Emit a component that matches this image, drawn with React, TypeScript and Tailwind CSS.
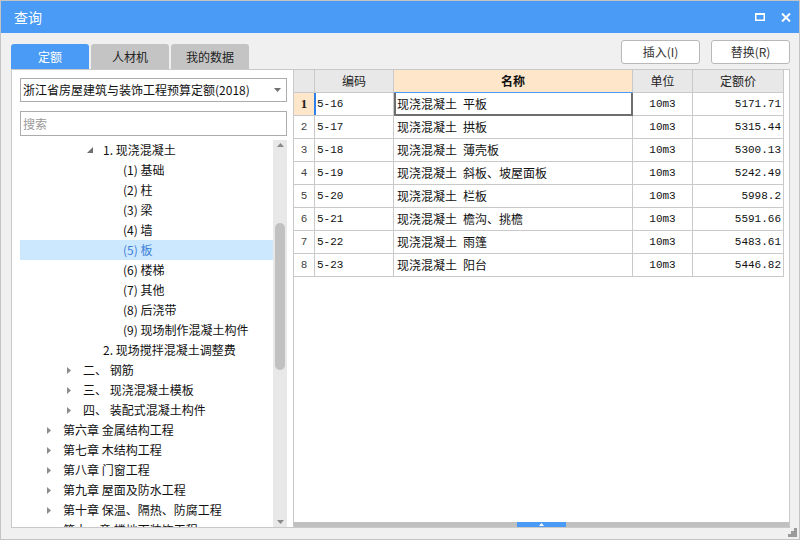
import React from 'react';

type TreeRow = { l: 1 | 2 | 3 | 4; t: string; tri?: 'open' | 'closed'; sel?: boolean };

const tree: TreeRow[] = [
  { l: 3, t: '1. 现浇混凝土', tri: 'open' },
  { l: 4, t: '(1) 基础' },
  { l: 4, t: '(2) 柱' },
  { l: 4, t: '(3) 梁' },
  { l: 4, t: '(4) 墙' },
  { l: 4, t: '(5) 板', sel: true },
  { l: 4, t: '(6) 楼梯' },
  { l: 4, t: '(7) 其他' },
  { l: 4, t: '(8) 后浇带' },
  { l: 4, t: '(9) 现场制作混凝土构件' },
  { l: 3, t: '2. 现场搅拌混凝土调整费' },
  { l: 2, t: '二、 钢筋', tri: 'closed' },
  { l: 2, t: '三、 现浇混凝土模板', tri: 'closed' },
  { l: 2, t: '四、 装配式混凝土构件', tri: 'closed' },
  { l: 1, t: '第六章 金属结构工程', tri: 'closed' },
  { l: 1, t: '第七章 木结构工程', tri: 'closed' },
  { l: 1, t: '第八章 门窗工程', tri: 'closed' },
  { l: 1, t: '第九章 屋面及防水工程', tri: 'closed' },
  { l: 1, t: '第十章 保温、隔热、防腐工程', tri: 'closed' },
  { l: 1, t: '第十一章 楼地面装饰工程', tri: 'closed' },
];

const pad: Record<number, string> = {
  1: 'pl-[27px]',
  2: 'pl-[47px]',
  3: 'pl-[67px]',
  4: 'pl-[87px]',
};

const rows = [
  ['5-16', '现浇混凝土', '平板', '10m3', '5171.71'],
  ['5-17', '现浇混凝土', '拱板', '10m3', '5315.44'],
  ['5-18', '现浇混凝土', '薄壳板', '10m3', '5300.13'],
  ['5-19', '现浇混凝土', '斜板、坡屋面板', '10m3', '5242.49'],
  ['5-20', '现浇混凝土', '栏板', '10m3', '5998.2'],
  ['5-21', '现浇混凝土', '檐沟、挑檐', '10m3', '5591.66'],
  ['5-22', '现浇混凝土', '雨篷', '10m3', '5483.61'],
  ['5-23', '现浇混凝土', '阳台', '10m3', '5446.82'],
];

const cellB = 'border-r border-b border-[#c9c9c9]';
const mono = "font-['Liberation_Mono','Noto_Sans_CJK_SC',monospace] text-[11px] text-[#111]";

export default function App() {
  return (
    <div className="w-[800px] h-[540px] bg-[#f0f0f0] border border-[#c4c4c4] flex flex-col relative overflow-hidden font-['Noto_Sans_CJK_SC',sans-serif] text-[12px] text-[#111]">
      {/* Title bar */}
      <div className="h-[32px] shrink-0 bg-[#4a9bf5] flex items-center pl-[13px] pr-[8px]">
        <span className="text-white text-[14px] leading-none">查询</span>
        <div className="ml-auto flex items-center gap-[16px]">
          <svg width="10" height="8" viewBox="0 0 10 8">
            <rect x="0.75" y="1" width="8.5" height="6.25" fill="none" stroke="#fff" strokeWidth="1.5" />
            <rect x="0" y="0" width="10" height="2" fill="#fff" />
          </svg>
          <svg width="10" height="9" viewBox="0 0 10 9">
            <path d="M1 0.5 L9 8.5 M9 0.5 L1 8.5" stroke="#fff" strokeWidth="2" />
          </svg>
        </div>
      </div>

      {/* Content */}
      <div className="flex flex-1 min-h-0 pl-[10px] pr-[9px]">
        {/* Left column */}
        <div className="w-[282px] shrink-0 flex flex-col pt-[11px] pb-[11px]">
          <div className="flex gap-[2px] h-[25px] shrink-0">
            <div className="w-[78px] bg-[#4a9bf5] text-white rounded-t-[3px] flex items-center justify-center leading-none">定额</div>
            <div className="w-[78px] bg-[#c4c4c4] text-[#222] rounded-t-[3px] flex items-center justify-center leading-none">人材机</div>
            <div className="w-[78px] bg-[#c4c4c4] text-[#222] rounded-t-[3px] flex items-center justify-center leading-none">我的数据</div>
          </div>
          <div className="flex-1 min-h-0 bg-white border-l border-t border-b border-[#c9c9c9] pl-[8px] pr-[6px] pt-[8px] flex flex-col">
            <div className="h-[24px] shrink-0 border border-[#acacac] flex items-center pl-[2px] pr-[5px]">
              <span className="leading-none text-[#111]">浙江省房屋建筑与装饰工程预算定额(2018)</span>
              <svg className="ml-auto" width="7" height="4" viewBox="0 0 7 4">
                <path d="M0 0 L7 0 L3.5 4Z" fill="#707070" />
              </svg>
            </div>
            <div className="h-[25px] shrink-0 mt-[9px] border border-[#acacac] flex items-center pl-[2px]">
              <span className="leading-none text-[#9a9a9a]">搜索</span>
            </div>
            <div className="flex-1 min-h-0 mt-[4px] flex overflow-hidden">
              <div className="flex-1 min-w-0 flex flex-col">
                {tree.map((r, i) => (
                  <div
                    key={i}
                    className={`h-[20px] shrink-0 flex items-center ${pad[r.l]} ${r.sel ? 'bg-[#cce8ff] text-[#3c7fd6]' : 'text-[#111]'}`}
                  >
                    <div className="w-[16px] shrink-0 flex items-center">
                      {r.tri === 'open' && (
                        <svg width="6" height="6" viewBox="0 0 6 6">
                          <path d="M6 0 L6 6 L0 6Z" fill="#6f6f6f" />
                        </svg>
                      )}
                      {r.tri === 'closed' && (
                        <svg width="4" height="7" viewBox="0 0 4 7">
                          <path d="M0 0 L4 3.5 L0 7Z" fill="#8c8c8c" />
                        </svg>
                      )}
                    </div>
                    <span className="leading-[20px] whitespace-nowrap">{r.t}</span>
                  </div>
                ))}
              </div>
              <div className="w-[14px] shrink-0 bg-[#e8e8e8] flex flex-col">
                <div className="h-[12px] shrink-0 pt-[3px] flex justify-center items-start">
                  <svg width="7" height="4" viewBox="0 0 7 4">
                    <path d="M3.5 0 L7 4 L0 4Z" fill="#8a8a8a" />
                  </svg>
                </div>
                <div className="mt-[71px] h-[147px] w-[10px] self-center rounded-full bg-[#c1c1c1]" />
                <div className="mt-auto h-[10px] shrink-0 pt-[3px] flex justify-center items-start">
                  <svg width="7" height="4" viewBox="0 0 7 4">
                    <path d="M0 0 L7 0 L3.5 4Z" fill="#8a8a8a" />
                  </svg>
                </div>
              </div>
            </div>
          </div>
        </div>

        {/* Right column */}
        <div className="flex-1 min-w-0 flex flex-col pt-[7px] pb-[11px]">
          <div className="flex justify-end gap-[11px] h-[24px] shrink-0">
            <div className="w-[79px] bg-white border border-[#b8b8b8] rounded-[3px] flex items-center justify-center text-[#333] leading-none">插入(I)</div>
            <div className="w-[79px] bg-white border border-[#b8b8b8] rounded-[3px] flex items-center justify-center text-[#333] leading-none">替换(R)</div>
          </div>
          <div className="mt-[5px] flex-1 min-h-0 bg-white border border-[#c9c9c9] flex flex-col">
            {/* Header */}
            <div className="flex h-[23px] shrink-0">
              <div className={`w-[21px] shrink-0 bg-[#e8e8e8] ${cellB}`} />
              <div className={`w-[79px] shrink-0 bg-[#e8e8e8] ${cellB} flex items-center justify-center text-[#222] leading-none`}>编码</div>
              <div className={`w-[239px] shrink-0 bg-[#fde6c9] ${cellB} border-b-[#4a9bf5] flex items-center justify-center font-bold text-[#111] leading-none`}>名称</div>
              <div className={`w-[60px] shrink-0 bg-[#e8e8e8] ${cellB} flex items-center justify-center text-[#222] leading-none`}>单位</div>
              <div className={`w-[91px] shrink-0 bg-[#e8e8e8] ${cellB} flex items-center justify-center text-[#222] leading-none`}>定额价</div>
            </div>
            {rows.map((r, i) => (
              <div key={i} className="flex h-[23px] shrink-0">
                <div
                  className={`w-[21px] shrink-0 ${cellB} flex items-center justify-center ${i === 0 ? "bg-[#fde6c9] font-bold font-['Liberation_Serif',serif] text-[13px] text-[#222]" : `${mono} text-[#444]`}`}
                >
                  {i + 1}
                </div>
                <div className={`w-[79px] shrink-0 ${cellB} relative flex items-center pl-[2px] ${mono}`}>
                  {i === 0 && <div className="absolute left-[-1px] top-0 bottom-0 w-[2px] bg-[#2f7fe8]" />}
                  {r[0]}
                </div>
                <div className={`w-[239px] shrink-0 ${cellB} relative flex items-center gap-[6px] pl-[3px] leading-none whitespace-nowrap text-[#111]`}>
                  {i === 0 && <div className="absolute left-0 top-0 right-[-1px] bottom-[-1px] border-2 border-t-0 border-[#6e6e6e]" />}
                  <span>{r[1]}</span>
                  <span>{r[2]}</span>
                </div>
                <div className={`w-[60px] shrink-0 ${cellB} flex items-center justify-center ${mono}`}>{r[3]}</div>
                <div className={`w-[91px] shrink-0 ${cellB} flex items-center justify-end pr-[2px] ${mono}`}>{r[4]}</div>
              </div>
            ))}
            <div className="flex-1" />
            <div className="h-[5px] shrink-0 bg-[#c0c0c0] flex justify-center">
              <div className="w-[49px] h-full bg-[#4a9bf5] flex items-center justify-center">
                <svg width="5" height="3" viewBox="0 0 5 3">
                  <path d="M2.5 0 L5 3 L0 3Z" fill="#fff" />
                </svg>
              </div>
            </div>
          </div>
        </div>
      </div>

      {/* Resize grip */}
      <svg className="absolute right-[2px] bottom-[2px]" width="9" height="9" viewBox="0 0 9 9">
        <rect x="6" y="0" width="3" height="3" fill="#9a9a9a" />
        <rect x="3" y="3" width="3" height="3" fill="#9a9a9a" />
        <rect x="6" y="3" width="3" height="3" fill="#9a9a9a" />
        <rect x="0" y="6" width="3" height="3" fill="#9a9a9a" />
        <rect x="3" y="6" width="3" height="3" fill="#9a9a9a" />
        <rect x="6" y="6" width="3" height="3" fill="#9a9a9a" />
      </svg>
    </div>
  );
}
